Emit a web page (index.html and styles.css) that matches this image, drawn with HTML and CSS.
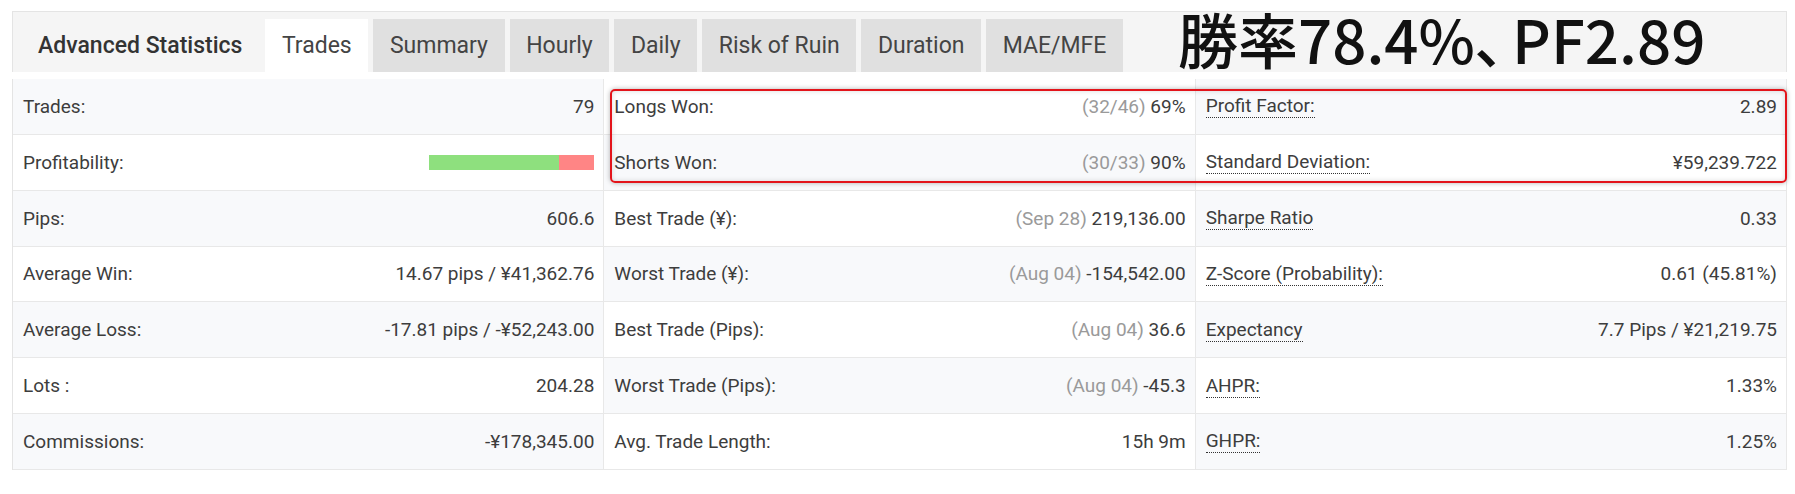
FILE: index.html
```html
<!DOCTYPE html>
<html lang="en">
<head>
    <meta charset="UTF-8">
    <title>Advanced Statistics</title>
    <link rel="stylesheet" href="styles.css">
</head>
<body>
    <div class="page">
        <div class="widget">
            <div class="tabbar">
                <div class="title">Advanced Statistics</div>
                <div class="tab active">Trades</div>
                <div class="tab">Summary</div>
                <div class="tab">Hourly</div>
                <div class="tab">Daily</div>
                <div class="tab">Risk of Ruin</div>
                <div class="tab">Duration</div>
                <div class="tab">MAE/MFE</div>
            </div>

            <div class="stats">
                <div class="col col-odd">
                    <div class="row"><span>Trades:</span><span>79</span></div>
                    <div class="row">
                        <span>Profitability:</span>
                        <div class="bar"><div class="bar-win" style="width: 78.5%"></div><div class="bar-loss"></div></div>
                    </div>
                    <div class="row"><span>Pips:</span><span>606.6</span></div>
                    <div class="row"><span>Average Win:</span><span>14.67 pips / ¥41,362.76</span></div>
                    <div class="row"><span>Average Loss:</span><span>-17.81 pips / -¥52,243.00</span></div>
                    <div class="row"><span>Lots :</span><span>204.28</span></div>
                    <div class="row"><span>Commissions:</span><span>-¥178,345.00</span></div>
                </div>

                <div class="col col-even">
                    <div class="row"><span>Longs Won:</span><span><span class="muted">(32/46)</span> 69%</span></div>
                    <div class="row"><span>Shorts Won:</span><span><span class="muted">(30/33)</span> 90%</span></div>
                    <div class="row"><span>Best Trade (¥):</span><span><span class="muted">(Sep 28)</span> 219,136.00</span></div>
                    <div class="row"><span>Worst Trade (¥):</span><span><span class="muted">(Aug 04)</span> -154,542.00</span></div>
                    <div class="row"><span>Best Trade (Pips):</span><span><span class="muted">(Aug 04)</span> 36.6</span></div>
                    <div class="row"><span>Worst Trade (Pips):</span><span><span class="muted">(Aug 04)</span> -45.3</span></div>
                    <div class="row"><span>Avg. Trade Length:</span><span>15h 9m</span></div>
                </div>

                <div class="col col-odd">
                    <div class="row"><span class="hint">Profit Factor:</span><span>2.89</span></div>
                    <div class="row"><span class="hint">Standard Deviation:</span><span>¥59,239.722</span></div>
                    <div class="row"><span class="hint">Sharpe Ratio</span><span>0.33</span></div>
                    <div class="row"><span class="hint">Z-Score (Probability):</span><span>0.61 (45.81%)</span></div>
                    <div class="row"><span class="hint">Expectancy</span><span>7.7 Pips / ¥21,219.75</span></div>
                    <div class="row"><span class="hint">AHPR:</span><span>1.33%</span></div>
                    <div class="row"><span class="hint">GHPR:</span><span>1.25%</span></div>
                </div>

                <!-- red annotation frame over the win rate / PF rows -->
                <div class="highlight"></div>
            </div>
        </div>

        <!-- annotation caption laid over the empty end of the tab bar -->
        <div class="headline">勝率78.4%<span class="comma">、</span>PF2.89</div>
    </div>
</body>
</html>
```

FILE: styles.css
```css
* {
    box-sizing: border-box;
}

body {
    margin: 0;
    background: #fff;
    color: #3d3d3d;
    font-family: Roboto, "Noto Sans", sans-serif;
}

.page {
    position: relative;
    padding: 11px 8px 20px 12px;
}

.tabbar {
    display: flex;
    align-items: flex-end;
    height: 61px;
    background: #f5f5f5;
    border: 1px solid #e4e4e4;
    border-bottom: none;
}

.title {
    height: 53px;
    line-height: 53px;
    padding: 0 23px 0 25px;
    font-size: 23px;
    font-weight: 500;
    color: #333;
}

.tab {
    height: 53px;
    line-height: 53px;
    padding: 0 16.6px;
    margin-right: 5px;
    background: #e0e0e0;
    font-size: 23px;
    color: #444;
}

.tab.active {
    background: #fff;
}

.headline {
    position: absolute;
    left: 1178px;
    top: 4px;
    font-family: "Noto Sans CJK JP", sans-serif;
    font-size: 60px;
    font-weight: 500;
    line-height: 68px;
    color: #111;
    white-space: nowrap;
}

.comma {
    font-feature-settings: "palt";
    margin-right: 0.12em;
}

.stats {
    position: relative;
    display: grid;
    grid-template-columns: repeat(3, 1fr);
    margin-top: 7px;
    border-left: 1px solid #e4e4e4;
}

.col {
    border-right: 1px solid #e8e8e8;
}

.row {
    display: flex;
    justify-content: space-between;
    align-items: center;
    height: 55.85px;
    padding: 0 9px 0 10px;
    border-bottom: 1px solid #e8e8e8;
    font-size: 19px;
    white-space: nowrap;
}

.col-odd .row:nth-child(odd),
.col-even .row:nth-child(even) {
    background: #f8f9fb;
}

.muted {
    color: #9a9a9a;
}

.hint {
    border-bottom: 1px dotted #333;
}

.bar {
    display: flex;
    width: 165px;
    height: 15px;
}

.bar-win {
    background: #8ee07e;
}

.bar-loss {
    flex: 1;
    background: #ff8585;
}

.highlight {
    position: absolute;
    left: 597px;
    top: 10px;
    width: 1177px;
    height: 94px;
    border: 2px solid #e3141b;
    border-radius: 5px;
    box-shadow: 0 0 5px rgba(0, 0, 0, 0.3), inset 0 0 5px rgba(0, 0, 0, 0.15);
    pointer-events: none;
}
```
